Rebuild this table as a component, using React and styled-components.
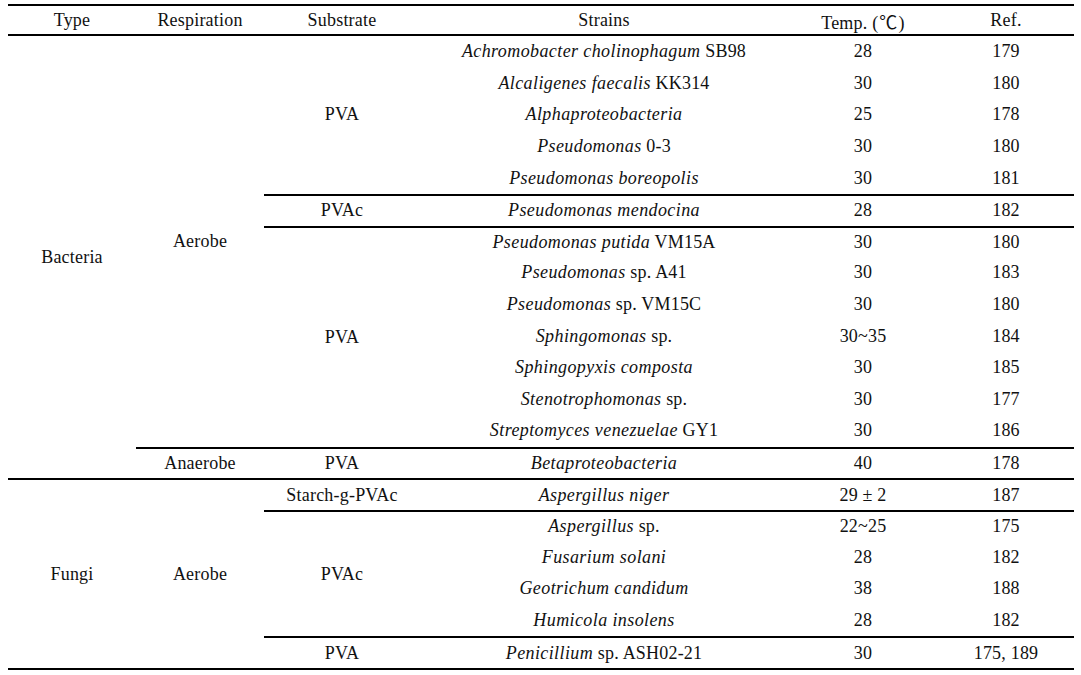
import React from "react";
import styled, { createGlobalStyle } from "styled-components";

const Global = createGlobalStyle`
  html, body { margin: 0; padding: 0; background: #ffffff; }
  body { font-family: "Liberation Serif", "Times New Roman", "Noto Sans CJK KR", serif; color: #111; }
`;

const Page = styled.div`
  padding: 4px 0 0 8px;
`;

const Table = styled.div`
  display: grid;
  width: 1066px;
  grid-template-columns: 128px 128px 156px 368px 150px 136px;
  grid-template-rows: 30px repeat(20, 31.6px);
  border-top: 2px solid #000;
  border-bottom: 2px solid #000;
  font-size: 18px;
`;

const Cell = styled.div`
  box-sizing: border-box;
  display: flex;
  align-items: center;
  justify-content: center;
  white-space: nowrap;
  grid-column: ${(p) => p.$col};
  grid-row: ${(p) => p.$row} / span ${(p) => p.$span || 1};
  border-top: ${(p) => (p.$top ? "2px solid #000" : "none")};
  border-bottom: ${(p) => (p.$head ? "2px solid #000" : "none")};
  padding-top: ${(p) => (p.$head ? "1px" : "0")};
  letter-spacing: 0.2px;
`;

const Sp = styled.i`
  font-style: italic;
  letter-spacing: 0.4px;
`;

const Deg = styled.span`
  font-family: "Noto Sans CJK KR", "DejaVu Serif", serif;
  font-size: 18px;
  font-weight: 400;
  margin: 0 1px;
`;

const headers = [
  "Type",
  "Respiration",
  "Substrate",
  "Strains",
  null,
  "Ref.",
];

// strains: [italic part, roman suffix, temp, ref]
const strains = [
  ["Achromobacter cholinophagum", "SB98", "28", "179"],
  ["Alcaligenes faecalis", "KK314", "30", "180"],
  ["Alphaproteobacteria", "", "25", "178"],
  ["Pseudomonas", "0-3", "30", "180"],
  ["Pseudomonas boreopolis", "", "30", "181"],
  ["Pseudomonas mendocina", "", "28", "182"],
  ["Pseudomonas putida", "VM15A", "30", "180"],
  ["Pseudomonas", "sp. A41", "30", "183"],
  ["Pseudomonas", "sp. VM15C", "30", "180"],
  ["Sphingomonas", "sp.", "30~35", "184"],
  ["Sphingopyxis composta", "", "30", "185"],
  ["Stenotrophomonas", "sp.", "30", "177"],
  ["Streptomyces venezuelae", "GY1", "30", "186"],
  ["Betaproteobacteria", "", "40", "178"],
  ["Aspergillus niger", "", "29 ± 2", "187"],
  ["Aspergillus", "sp.", "22~25", "175"],
  ["Fusarium solani", "", "28", "182"],
  ["Geotrichum candidum", "", "38", "188"],
  ["Humicola insolens", "", "28", "182"],
  ["Penicillium", "sp. ASH02-21", "30", "175, 189"],
];

// rows (1-based within body) whose top gets a line from the substrate column on
const subLines = new Set([6, 7, 14, 15, 16, 20]);

const groups = [
  { col: 1, start: 1, span: 14, text: "Bacteria" },
  { col: 1, start: 15, span: 6, text: "Fungi", top: true },
  { col: 2, start: 1, span: 13, text: "Aerobe" },
  { col: 2, start: 14, span: 1, text: "Anaerobe", top: true },
  { col: 2, start: 15, span: 6, text: "Aerobe", top: true },
  { col: 3, start: 1, span: 5, text: "PVA" },
  { col: 3, start: 6, span: 1, text: "PVAc", top: true },
  { col: 3, start: 7, span: 7, text: "PVA", top: true },
  { col: 3, start: 14, span: 1, text: "PVA", top: true },
  { col: 3, start: 15, span: 1, text: "Starch-g-PVAc", top: true },
  { col: 3, start: 16, span: 4, text: "PVAc", top: true },
  { col: 3, start: 20, span: 1, text: "PVA", top: true },
];

export default function App() {
  return (
    <Page>
      <Global />
      <Table>
        {headers.map((h, i) => (
          <Cell key={"h" + i} $head $col={i + 1} $row={1}>
            {h === null ? (
              <span>
                Temp. (<Deg>℃</Deg>)
              </span>
            ) : (
              h
            )}
          </Cell>
        ))}
        {groups.map((g, i) => (
          <Cell
            key={"g" + i}
            $col={g.col}
            $row={g.start + 1}
            $span={g.span}
            $top={g.top}
          >
            {g.text}
          </Cell>
        ))}
        {strains.map(([it, rest, temp, ref], i) => {
          const r = i + 1;
          const top = subLines.has(r);
          return (
            <React.Fragment key={"s" + i}>
              <Cell $col={4} $row={r + 1} $top={top}>
                <span>
                  <Sp>{it}</Sp>
                  {rest ? " " + rest : ""}
                </span>
              </Cell>
              <Cell $col={5} $row={r + 1} $top={top}>
                {temp}
              </Cell>
              <Cell $col={6} $row={r + 1} $top={top}>
                {ref}
              </Cell>
            </React.Fragment>
          );
        })}
      </Table>
    </Page>
  );
}
